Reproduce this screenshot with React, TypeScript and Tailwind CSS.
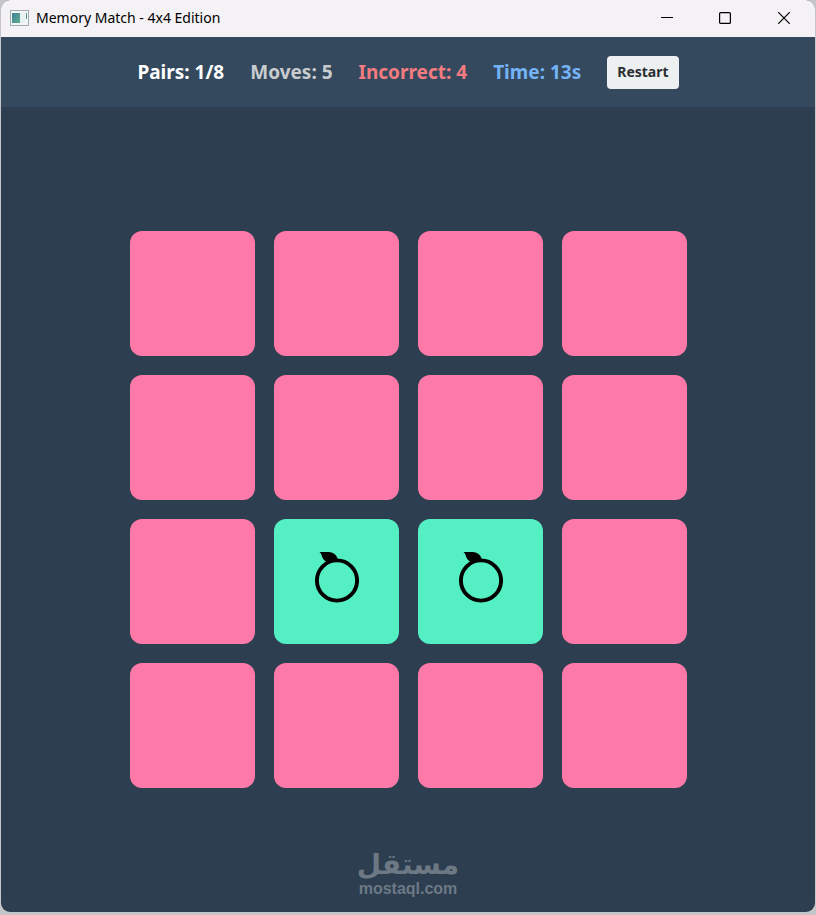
import { useState } from 'react'

const stats = [
  { label: 'Pairs', value: '1/8', color: 'text-white' },
  { label: 'Moves', value: '5', color: 'text-[#c8cccf]' },
  { label: 'Incorrect', value: '4', color: 'text-[#f47c80]' },
  { label: 'Time', value: '13s', color: 'text-[#74b3f8]' },
]

const MATCHED = [9, 10]

function AppIcon() {
  return (
    <svg width="19" height="16" viewBox="0 0 19 16" aria-hidden="true">
      <defs>
        <linearGradient id="pane" x1="0" y1="0" x2="1" y2="1">
          <stop offset="0" stopColor="#3f7f9c" />
          <stop offset="1" stopColor="#5fae8c" />
        </linearGradient>
      </defs>
      <rect x="0.5" y="0.5" width="18" height="15" fill="#f4f6f6" stroke="#a3abb0" />
      <rect x="2" y="3" width="8" height="10" fill="url(#pane)" />
      <rect x="10" y="3" width="5" height="10" fill="#e9f0f0" />
      <rect x="16" y="3" width="1" height="6" fill="#4f9a86" />
    </svg>
  )
}

function FruitIcon() {
  return (
    <svg width="46" height="52" viewBox="-1 0 46 52" role="img" aria-label="Fruit">
      <circle cx="23" cy="29.5" r="20.1" fill="none" stroke="#000" strokeWidth="3.9" />
      <path d="M5.500 1H14.500C20 1 23.500 4.500 24 10L15 11.500C11 10.500 8.800 8.500 8 5.500C7.500 3.500 7 2.500 5.500 1Z" fill="#000" />
    </svg>
  )
}

function TitleBar() {
  return (
    <div className="flex h-[37px] items-center justify-between bg-[#f4f2f4] pr-px pb-px pl-[9px] text-black">
      <div className="flex items-center gap-[7px]">
        <AppIcon />
        <h1 className="font-['Noto_Sans','Open_Sans',sans-serif] text-sm">Memory Match - 4x4 Edition</h1>
      </div>
      <div className="flex h-full">
        <button type="button" aria-label="Minimize" className="flex w-[58px] items-center justify-center">
          <svg width="12" height="12" viewBox="0 0 12 12">
            <path d="M0 5.500H12" stroke="currentColor" />
          </svg>
        </button>
        <button type="button" aria-label="Maximize" className="flex w-[58px] items-center justify-center">
          <svg width="12" height="12" viewBox="0 0 12 12">
            <rect x="0.6" y="0.6" width="10.800" height="10.800" rx="1" fill="none" stroke="currentColor" strokeWidth="1.200" />
          </svg>
        </button>
        <button type="button" aria-label="Close" className="flex w-[60px] items-center justify-center">
          <svg width="12" height="12" viewBox="0 0 12 12">
            <path d="M0.300 0.300L11.700 11.700M11.700 0.300L0.300 11.700" stroke="currentColor" strokeWidth="1.200" />
          </svg>
        </button>
      </div>
    </div>
  )
}

export default function App() {
  const [selected, setSelected] = useState<number | null>(null)

  return (
    <div className="flex min-h-screen flex-col bg-[#c4c6c9] px-px pb-[3px] font-['Noto_Sans','Open_Sans',sans-serif]">
      <main className="relative flex flex-1 flex-col overflow-hidden rounded-[9px] bg-[#2d3e50]">
        <TitleBar />

        {/* Score bar */}
        <header className="flex h-[70px] items-center justify-center gap-[26px] bg-[#35495e] text-[19px] font-bold">
          {stats.map((stat) => (
            <span key={stat.label} className={stat.color}>
              {stat.label}: {stat.value}
            </span>
          ))}
          <button
            type="button"
            onClick={() => setSelected(null)}
            className="h-[33px] rounded-[4px] bg-[#ecf0f1] px-[10px] text-sm text-[#2c2f31]"
          >
            Restart
          </button>
        </header>

        {/* Board */}
        <section className="flex flex-1 items-center justify-center">
          <div className="grid grid-cols-4 gap-[19px]">
            {Array.from({ length: 16 }, (_, i) => {
              const matched = MATCHED.includes(i)
              return (
                <button
                  key={i}
                  type="button"
                  aria-label={`Card ${i + 1}`}
                  aria-pressed={matched || selected === i}
                  onClick={() => setSelected(i)}
                  className={`flex size-[125px] items-center justify-center rounded-xl pb-[10px] ${
                    matched ? 'bg-[#55efc4]' : 'bg-[#fd79a8]'
                  }`}
                >
                  {matched && <FruitIcon />}
                </button>
              )
            })}
          </div>
        </section>

        {/* Watermark */}
        <div className="pointer-events-none absolute inset-x-0 bottom-[15px] flex flex-col items-center font-bold text-[#6c7985]">
          <span lang="ar" dir="rtl" className="font-['DejaVu_Sans',sans-serif] text-[28px] leading-8">
            مستقل
          </span>
          <span className="font-['Liberation_Sans',Arial,sans-serif] text-base leading-4">mostaql.com</span>
        </div>
      </main>
    </div>
  )
}
